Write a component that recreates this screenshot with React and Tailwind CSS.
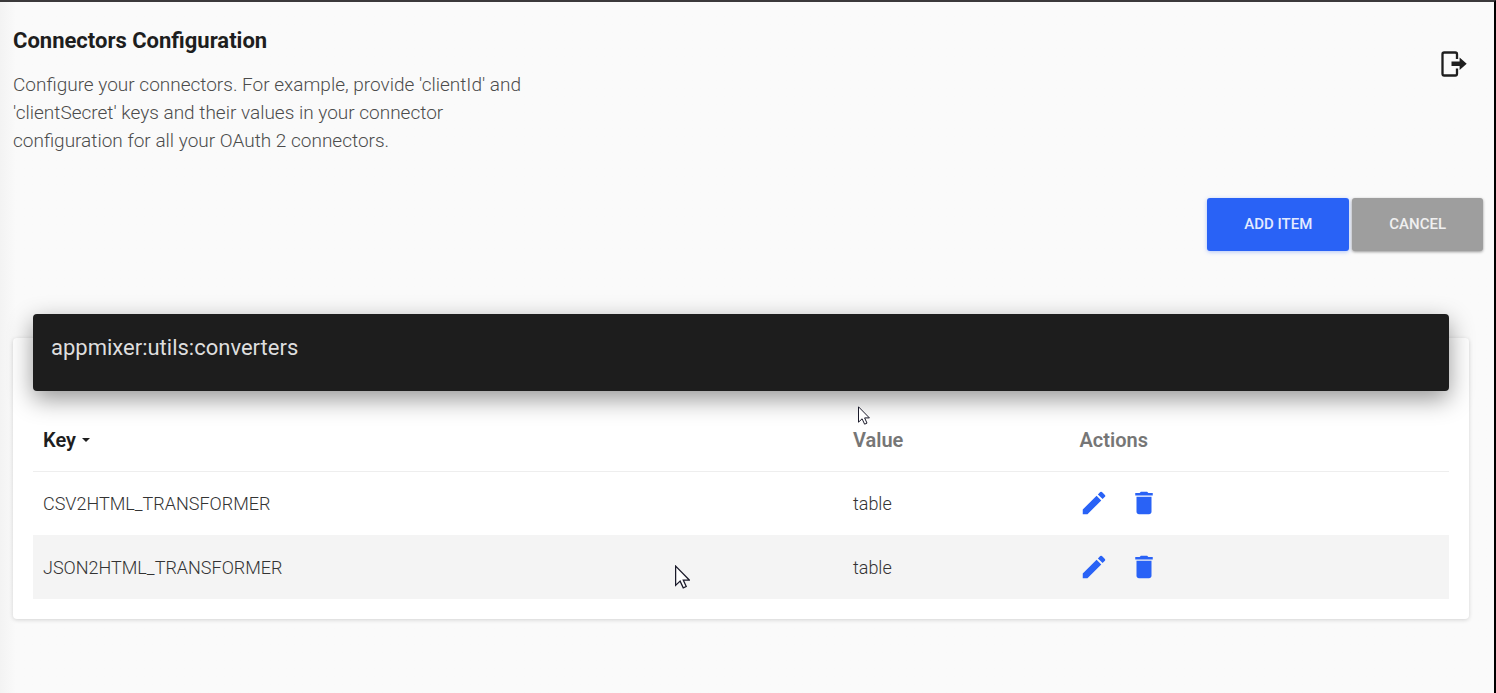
import React from "react";
import { MdEdit, MdDelete } from "react-icons/md";

const items = [
  { key: "CSV2HTML_TRANSFORMER", value: "table" },
  { key: "JSON2HTML_TRANSFORMER", value: "table" },
];

function ExitIcon() {
  return (
    <svg width="26" height="26" viewBox="0 0 26 26" aria-hidden="true">
      <path
        d="M16 8V3.2Q16 1.5 14.3 1.5H3.2Q1.5 1.5 1.5 3.2V22.8Q1.5 24.5 3.2 24.5H14.3Q16 24.5 16 22.8V17.5"
        fill="none"
        stroke="#1e1e1e"
        strokeWidth="2.3"
      />
      <path d="M10.5 10.5H18.6V6.6L25.7 12.8L18.6 19V15.1H10.5Z" fill="#1e1e1e" />
    </svg>
  );
}

function Pointer({ className }) {
  return (
    <svg className={className} viewBox="0 0 12 19" aria-hidden="true">
      <path
        d="M0.5 0.8V16.2L4.1 12.8L6.6 18.2L9 17.1L6.6 11.9H11.4Z"
        fill="#fff"
        stroke="#1b1b2b"
        strokeWidth="1"
      />
    </svg>
  );
}

export default function App() {
  return (
    <div className="relative min-h-screen border-t-2 border-r-2 border-t-[#3b393b] border-r-black bg-[#fafafa] bg-linear-to-r from-[#f3f3f3] to-[#fafafa] to-[16px] pl-[13px] font-['Roboto',sans-serif] text-[#1e1e1e]">
      <header className="flex items-start justify-between pt-6 pr-[27px]">
        <div className="max-w-[510px]">
          <h1 className="text-[22px] leading-[30px] font-bold">Connectors Configuration</h1>
          <p className="mt-[15px] text-[19px] leading-7 font-light text-[#4c4c4c]">
            Configure your connectors. For example, provide 'clientId' and 'clientSecret' keys and
            their values in your connector configuration for all your OAuth 2 connectors.
          </p>
        </div>
        <button type="button" aria-label="Sign out" className="mt-[25px]">
          <ExitIcon />
        </button>
      </header>

      <div className="mt-[43px] flex justify-end gap-[3px] pr-[11px]">
        <button
          type="button"
          className="h-[53px] rounded-[3px] bg-[#2962f6] px-[37px] text-[15px] font-medium text-[#e3eaff] shadow-[0_1px_4px_rgba(41,98,246,0.35)]"
        >
          ADD ITEM
        </button>
        <button
          type="button"
          className="h-[53px] rounded-[3px] bg-[#9e9e9e] px-[37px] text-[15px] font-medium text-[#f0f0f0] shadow-[0_1px_3px_rgba(0,0,0,0.4)]"
        >
          CANCEL
        </button>
      </div>

      <section className="mt-[87px] mr-[25px] rounded-[4px] bg-white px-5 pb-5 shadow-[0_1px_4px_rgba(0,0,0,0.16)]">
        <div className="relative -top-6 -mb-6 h-[77px] rounded-[4px] bg-[#1d1d1d] px-[18px] pt-[18px] shadow-[0_8px_24px_rgba(0,0,0,0.42)]">
          <h2 className="text-[22px] leading-8 text-[#dedede]">appmixer:utils:converters</h2>
        </div>
        <table className="mt-4 w-full table-fixed text-left">
          <thead>
            <tr className="h-16 border-b border-[#eeeeee] text-xl text-[#767676]">
              <th className="w-[57.2%] px-2.5 pt-0.5 font-semibold text-[#1e1e1e]">
                <button type="button" className="flex items-center gap-1.5">
                  Key
                  <svg width="8" height="4" viewBox="0 0 8 4" aria-hidden="true">
                    <path d="M0 0H8L4 4Z" fill="#1e1e1e" />
                  </svg>
                </button>
              </th>
              <th className="w-[16%] px-2.5 pt-0.5 font-semibold">Value</th>
              <th className="px-2.5 pt-0.5 font-semibold">Actions</th>
            </tr>
          </thead>
          <tbody>
            {items.map((item) => (
              <tr key={item.key} className="h-16 text-lg font-light text-[#333333] even:bg-[#f4f4f4]">
                <td className="px-2.5 pt-0.5">{item.key}</td>
                <td className="px-2.5 pt-0.5">{item.value}</td>
                <td className="px-2.5">
                  <div className="flex gap-5 text-[30px] text-[#2962f6]">
                    <button type="button" aria-label={`Edit ${item.key}`}>
                      <MdEdit />
                    </button>
                    <button type="button" aria-label={`Delete ${item.key}`}>
                      <MdDelete />
                    </button>
                  </div>
                </td>
              </tr>
            ))}
          </tbody>
        </table>
      </section>

      <Pointer className="absolute top-[404px] left-[858px] h-[19px] w-3" />
      <Pointer className="absolute top-[563px] left-[675px] h-6 w-[15px]" />
    </div>
  );
}
